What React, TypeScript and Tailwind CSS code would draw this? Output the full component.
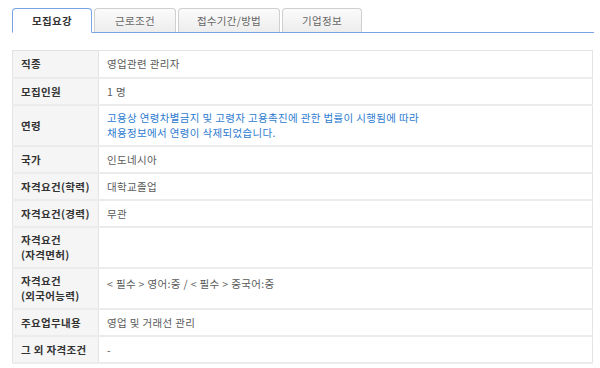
import React from 'react'

const font = { fontFamily: '"Noto Sans CJK KR", "Noto Sans", sans-serif' }

const App: React.FC = () => {
  const tabs = [
    { name: '모집요강', w: 'w-[80px]' },
    { name: '근로조건', w: 'w-[82px]' },
    { name: '접수기간/방법', w: 'w-[102px]' },
    { name: '기업정보', w: 'w-[80px]' },
  ]
  const rows: { label: React.ReactNode; value: React.ReactNode; tall?: boolean; top?: boolean }[] = [
    { label: '직종', value: '영업관련 관리자' },
    { label: '모집인원', value: '1 명' },
    {
      label: '연령',
      tall: true,
      value: (
        <span className="text-[#2d7bd0]">
          고용상 연령차별금지 및 고령자 고용촉진에 관한 법률이 시행됨에 따라
          <br />
          채용정보에서 연령이 삭제되었습니다.
        </span>
      ),
    },
    { label: '국가', value: '인도네시아' },
    { label: '자격요건(학력)', value: '대학교졸업' },
    { label: '자격요건(경력)', value: '무관' },
    {
      label: (
        <>
          자격요건
          <br />
          (자격면허)
        </>
      ),
      value: '',
      tall: true,
    },
    {
      label: (
        <>
          자격요건
          <br />
          (외국어능력)
        </>
      ),
      value: '< 필수 > 영어:중 / < 필수 > 중국어:중',
      tall: true,
      top: true,
    },
    { label: '주요업무내용', value: '영업 및 거래선 관리' },
    { label: '그 외 자격조건', value: '-' },
  ]
  return (
    <main className="w-[600px] h-[368px] bg-white pt-2 px-3 overflow-hidden" style={font}>
      <div className="flex gap-[2px] border-b border-[#7ba4e4] w-[582px]">
        {tabs.map((t, i) =>
          i === 0 ? (
            <div
              key={i}
              className={`${t.w} h-[25px] -mb-px flex items-center justify-center bg-white border border-b-white border-[#7ba4e4] rounded-t-[4px] text-[10.5px] tracking-[0.3px] font-bold text-[#333]`}
            >
              {t.name}
            </div>
          ) : (
            <div
              key={i}
              className={`${t.w} h-[24px] flex items-center justify-center bg-gradient-to-b from-[#fbfbfb] to-[#ededed] border border-b-0 border-[#cfcfcf] rounded-t-[4px] text-[10.5px] tracking-[0.3px] text-[#666]`}
            >
              {t.name}
            </div>
          )
        )}
      </div>
      <table className="mt-[17px] w-[581px] border-collapse border border-[#e3e3e3] text-[10.5px] tracking-[0.35px]">
        <tbody>
          {rows.map((r, i) => (
            <tr key={i} className={`border-b-2 border-[#ececec] ${r.tall ? 'h-[41px]' : 'h-[27px]'}`}>
              <td className="w-[86px] bg-[#f5f5f5] border-r border-[#e3e3e3] px-2 font-bold text-[#333] leading-[15px] align-middle">
                {r.label}
              </td>
              <td className={`px-2 text-[#5a5a5a] leading-[15px] ${r.top ? 'align-top pt-[7px]' : 'align-middle'}`}>
                {r.value}
              </td>
            </tr>
          ))}
        </tbody>
      </table>
    </main>
  )
}

export default App
